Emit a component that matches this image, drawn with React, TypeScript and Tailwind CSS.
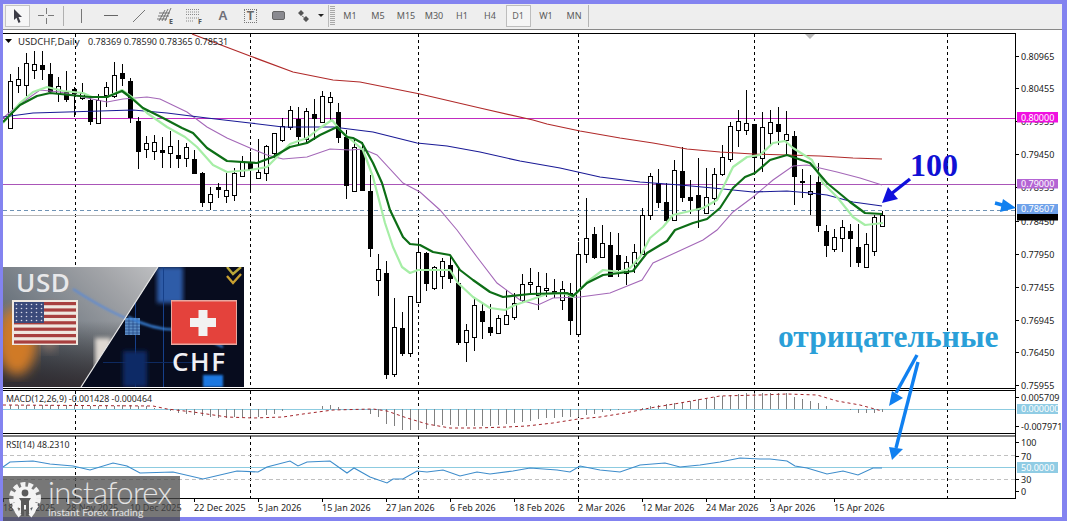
import React from "react";

const C: number[][] = [
[117,117,150,150,1],[74,81,128,128,0],[67,79,85,93,0],[53,63,85,96,0],[51,64,70,79,0],[51,65,69,80,1],[63,74,91,93,1],[77,86,93,102,0],[71,91,99,102,1],[87,89,93,117,1],
[83,93,98,100,0],[98,100,121,125,1],[94,100,123,124,0],[82,87,95,107,0],[62,75,96,98,0],[64,73,78,86,1],[78,81,117,123,1],[117,121,151,169,1],[136,143,149,158,0],[135,142,151,160,0],
[137,150,152,168,1],[131,146,153,168,0],[140,155,158,168,1],[143,147,158,167,0],[150,159,173,173,1],[172,173,202,207,1],[187,194,202,210,0],[183,187,189,198,1],[173,190,196,203,0],[168,173,195,201,0],
[156,161,176,176,0],[152,162,169,193,1],[139,172,178,178,0],[145,146,173,181,0],[133,133,153,158,0],[118,126,140,142,0],[106,110,127,130,0],[107,119,136,145,1],[108,111,139,143,0],[99,114,118,140,1],
[91,96,122,123,0],[92,97,102,122,0],[103,112,137,143,1],[130,137,185,199,1],[138,147,191,191,0],[142,150,190,190,1],[175,191,248,257,1],[254,269,280,296,0],[261,273,374,379,1],[298,327,374,377,0],
[312,328,353,356,1],[296,296,353,357,0],[238,252,302,303,0],[252,253,283,291,1],[266,267,288,290,0],[258,261,276,289,0],[255,265,278,283,1],[268,283,342,345,1],[324,330,342,362,0],[298,305,337,351,0],
[302,311,321,339,1],[304,327,332,336,1],[315,318,333,334,0],[290,315,324,324,0],[293,303,317,320,0],[274,284,300,302,0],[268,282,284,293,0],[272,286,295,310,0],[273,288,290,297,0],[279,291,293,298,1],
[281,289,300,310,0],[283,293,320,335,1],[242,254,334,334,0],[198,238,254,263,0],[227,234,257,259,1],[225,243,257,257,0],[232,245,276,277,1],[233,255,269,277,1],[256,262,273,285,0],[244,252,263,273,0],
[208,215,254,254,0],[173,176,215,220,0],[169,183,202,208,1],[183,202,220,223,1],[160,170,220,220,0],[147,171,197,202,1],[180,197,200,214,1],[158,195,209,228,1],[168,197,213,214,0],[168,174,198,205,0],
[145,157,174,176,0],[122,126,159,162,0],[110,121,130,147,0],[90,123,130,135,0],[124,124,157,175,1],[112,127,158,172,0],[110,122,133,145,0],[107,124,131,145,1],[111,134,140,155,0],[131,136,176,205,1],
[169,181,182,198,1],[175,191,194,215,0],[163,182,225,232,1],[225,231,245,257,1],[229,237,249,252,0],[220,227,238,252,0],[224,231,238,267,1],[224,247,262,267,1],[233,244,267,267,0],[215,217,251,256,0],[211,215,226,226,0],
];

const toPts = (a: number[][]) => a.map((p) => p.join(",")).join(" ");

const LIGHT = [[3,123],[20,103],[33,92],[47,87],[63,91],[83,93],[92,97],[107,97],[122,90],[133,98],[147,113],[167,127],[185,137],[197,147],[213,165],[227,172],[250,170],[267,167],[277,157],[290,144],[307,138],[320,128],[332,120],[340,130],[363,150],[373,177],[385,223],[393,247],[402,267],[410,273],[418,270],[450,270],[458,283],[473,297],[490,308],[505,310],[515,305],[530,300],[547,294],[563,293],[573,297],[587,282],[603,270],[620,272],[630,268],[640,257],[650,238],[663,227],[673,215],[703,208],[717,200],[733,167],[747,157],[760,155],[773,143],[785,141],[793,148],[812,160],[823,183],[837,197],[853,217],[865,225],[883,223]];
const DARK = [[3,122],[20,105],[37,96],[50,93],[70,95],[90,97],[107,97],[122,91],[130,97],[143,108],[163,118],[182,128],[193,133],[207,148],[227,161],[257,163],[273,157],[290,147],[307,143],[320,135],[337,127],[347,137],[353,138],[362,143],[373,163],[382,183],[390,210],[403,237],[410,244],[420,245],[433,252],[450,255],[460,270],[473,280],[490,292],[503,297],[530,294],[567,293],[573,296],[587,283],[603,275],[620,273],[633,271],[647,253],[667,241],[675,230],[693,223],[707,219],[720,208],[733,188],[745,177],[755,173],[770,160],[787,155],[810,163],[827,183],[850,202],[865,213],[882,214]];
const PURPLE = [[3,118],[20,104],[40,90],[60,92],[87,98],[107,102],[123,99],[147,97],[160,99],[187,112],[207,127],[227,138],[250,148],[267,155],[283,159],[307,157],[330,149],[350,150],[363,149],[377,155],[403,183],[420,192],[440,210],[457,230],[477,257],[497,283],[520,300],[538,305],[553,298],[580,297],[610,293],[642,280],[653,263],[677,252],[703,240],[717,230],[733,212],[753,197],[773,180],[793,166],[807,165],[837,172],[860,178],[882,185]];
const NAVY = [[3,117],[33,113],[67,112],[133,110],[167,113],[207,118],[250,123],[283,127],[333,127],[373,132],[417,143],[447,146],[480,152],[520,161],[560,168],[600,177],[640,182],[680,185],[713,188],[753,192],[787,191],[810,193],[827,195],[853,202],[882,206]];
const RED = [[192,34],[250,56],[293,72],[333,80],[360,82],[420,94],[480,108],[533,120],[547,124],[580,131],[620,138],[653,143],[687,149],[720,152],[753,154],[787,155],[820,156],[853,158],[882,159]];
const SIGNAL = [[3,405],[153,406],[167,409],[193,412],[227,417],[253,418],[283,417],[303,414],[333,410],[373,409],[387,411],[407,418],[427,424],[450,428],[477,428],[507,427],[527,426],[553,423],[578,419],[600,417],[625,413],[650,408],[680,403],[720,396],[760,395],[787,394],[817,395],[837,401],[860,405],[882,411]];
const RSI = [[3,467],[10,462],[33,461],[50,464],[73,466],[90,470],[113,463],[127,466],[140,473],[173,472],[203,479],[237,471],[258,472],[267,467],[290,461],[298,466],[307,462],[330,461],[347,473],[354,468],[370,477],[387,483],[393,479],[403,479],[417,471],[427,472],[443,470],[460,476],[477,472],[490,474],[513,471],[530,468],[557,470],[570,472],[580,466],[600,470],[620,472],[640,465],[665,463],[680,467],[700,465],[720,462],[740,458],[760,459],[770,459],[787,461],[795,466],[807,468],[827,474],[843,471],[858,475],[873,468],[882,468]];

const HIST = [4,4,4,4,4,4,4,4,4,4,3,3,3,3,3,4,4,3,3,1,0,-2,-4,-5,-6,-7,-8,-9,-9,-8,-8,-8,-8,-6,-5,-2,0,0,0,0,3,4,2,0,0,0,-5,-8,-15,-17,-21,-21,-21,-20,-17,-16,-16,-17,-17,-17,-17,-17,-16,-15,-14,-13,-12,-10,-9,-9,-8,-8,-8,-6,-5,-3,-2,-1,0,0,1,3,4,5,6,7,8,10,11,12,13,14,15,16,16,16,16,16,16,12,10,8,6,3,0,0,-1,-4,-4,-4,-3];

const VERT = [75, 250, 418, 578, 754, 947];
const FONT = "'Noto Sans', 'Liberation Sans', sans-serif";

function Verticals({ y1, y2 }: { y1: number; y2: number }) {
  return (
    <>
      {VERT.map((x) => (
        <line key={x} x1={x + 0.5} x2={x + 0.5} y1={y1} y2={y2} stroke="#000" strokeDasharray="3 3" shapeRendering="crispEdges" />
      ))}
    </>
  );
}

function Tick({ y, t, fill = "#222" }: { y: number; t: string; fill?: string }) {
  return (
    <>
      <line x1="1015" x2="1019" y1={y + 0.5} y2={y + 0.5} stroke="#000" shapeRendering="crispEdges" />
      <text x="1021" y={y + 3.5} fontSize="9" fill={fill} fontFamily={FONT}>{t}</text>
    </>
  );
}

function Tag({ y, h, fill, t, color = "#fff" }: { y: number; h: number; fill: string; t: string; color?: string }) {
  return (
    <>
      <rect x="1017" y={y} width="41" height={h} fill={fill} />
      <text x="1021" y={y + h / 2 + 3.3} fontSize="9" fill={color} fontFamily={FONT}>{t}</text>
    </>
  );
}

function MainPane() {
  return (
    <svg viewBox="3 33 1059 357" width="1059" height="357" className="block shrink-0 bg-white">
      <rect x="3" y="33" width="1012" height="1" fill="#000" />
      <Verticals y1={34} y2={388} />
      <path d="M805 34h10l-5 5z" fill="#b8b8b8" />
      <line x1="3" x2="1015" y1="118.5" y2="118.5" stroke="#c02cc0" shapeRendering="crispEdges" />
      <line x1="3" x2="1015" y1="184.5" y2="184.5" stroke="#aa55b8" shapeRendering="crispEdges" />
      <line x1="3" x2="1015" y1="210.5" y2="210.5" stroke="#6f93b5" strokeDasharray="4 3" shapeRendering="crispEdges" />
      <line x1="3" x2="1015" y1="215.5" y2="215.5" stroke="#b8b8b8" shapeRendering="crispEdges" />
      {C.map((c, i) => {
        const x = 2.5 + 8 * i;
        const [wt, bt, bb, wb, black] = c;
        return (
          <g key={i} shapeRendering="crispEdges">
            <line x1={x} x2={x} y1={wt} y2={wb} stroke="#000" />
            {i > 0 && (
              <rect x={x - 2} y={bt + 0.5} width={4} height={Math.max(bb - bt, 1)} fill={black ? "#000" : "#fff"} stroke="#000" />
            )}
          </g>
        );
      })}
      <polyline points={toPts(RED)} fill="none" stroke="#b02a2a" strokeWidth="1.2" />
      <polyline points={toPts(PURPLE)} fill="none" stroke="#a468b8" strokeWidth="1.1" />
      <polyline points={toPts(NAVY)} fill="none" stroke="#1a1a96" strokeWidth="1.2" />
      <polyline points={toPts(LIGHT)} fill="none" stroke="#a6eea6" strokeWidth="2.2" strokeLinejoin="round" />
      <polyline points={toPts(DARK)} fill="none" stroke="#0d6e16" strokeWidth="2.2" strokeLinejoin="round" />
      <path d="M5 39h7l-3.5 4z" fill="#000" />
      <text x="18" y="44.5" fontSize="9.6" fill="#2a2a2a" fontFamily={FONT}>USDCHF,Daily</text>
      <text x="88" y="44.5" fontSize="9" fill="#2a2a2a" fontFamily={FONT}>0.78369 0.78590 0.78365 0.78531</text>
      <rect x="3" y="388" width="1012" height="1" fill="#000" />
      <rect x="1015" y="33" width="1" height="357" fill="#000" />
      <Tick y={56} t="0.80965" />
      <Tick y={88} t="0.80455" />
      <Tick y={121} t="0.79955" />
      <Tick y={154} t="0.79450" />
      <Tick y={187} t="0.78955" />
      <Tick y={221} t="0.78450" />
      <Tick y={254} t="0.77950" />
      <Tick y={287} t="0.77455" />
      <Tick y={320} t="0.76945" />
      <Tick y={352} t="0.76450" />
      <Tick y={385} t="0.75955" />
      <Tag y={112} h={10.5} fill="#f010e0" t="0.80000" />
      <Tag y={179} h={9.5} fill="#b464d4" t="0.79000" />
      <rect x="1017" y="214" width="41" height="6.5" fill="#000" />
      <Tag y={204} h={10} fill="#6fa2ea" t="0.78607" />
    </svg>
  );
}

function MacdPane() {
  return (
    <svg viewBox="3 390 1059 44" width="1059" height="44" className="block shrink-0 bg-white">
      <rect x="3" y="390" width="1012" height="1" fill="#000" />
      <rect x="3" y="433" width="1012" height="1" fill="#000" />
      <Verticals y1={391} y2={433} />
      <line x1="3" x2="1015" y1="409.5" y2="409.5" stroke="#8ccbe0" shapeRendering="crispEdges" />
      {HIST.map((h, i) =>
        h === 0 ? null : (
          <line key={i} x1={2.5 + 8 * i} x2={2.5 + 8 * i} y1={409} y2={409 - h} stroke="#808080" shapeRendering="crispEdges" />
        )
      )}
      <polyline points={toPts(SIGNAL)} fill="none" stroke="#a4262c" strokeDasharray="3 3" />
      <text x="6" y="402" fontSize="8.8" fill="#2a2a2a" fontFamily={FONT}>MACD(12,26,9) -0.001428 -0.000464</text>
      <rect x="1015" y="390" width="1" height="44" fill="#000" />
      <Tick y={397} t="0.005709" />
      <Tick y={426} t="-0.007971" />
      <Tag y={404} h={10} fill="#90cce4" t="0.000000" />
    </svg>
  );
}

function RsiPane() {
  return (
    <svg viewBox="3 434 1059 65" width="1059" height="65" className="block shrink-0 bg-white">
      <rect x="3" y="435.5" width="1012" height="1" fill="#000" />
      <Verticals y1={436} y2={498} />
      <line x1="3" x2="1015" y1="455.5" y2="455.5" stroke="#c0c0c0" strokeDasharray="4 3" shapeRendering="crispEdges" />
      <line x1="3" x2="1015" y1="479.5" y2="479.5" stroke="#c0c0c0" strokeDasharray="4 3" shapeRendering="crispEdges" />
      <line x1="3" x2="1015" y1="467.5" y2="467.5" stroke="#8ccbe0" shapeRendering="crispEdges" />
      <polyline points={toPts(RSI)} fill="none" stroke="#3d8ccb" strokeWidth="1.1" />
      <text x="6" y="448" fontSize="8.8" fill="#2a2a2a" fontFamily={FONT}>RSI(14) 48.2310</text>
      <rect x="3" y="498" width="1013" height="1" fill="#000" />
      <rect x="1015" y="434" width="1" height="65" fill="#000" />
      <Tick y={442} t="100" />
      <Tick y={456} t="70" />
      <Tick y={479} t="30" />
      <Tick y={491} t="0" />
      <Tag y={462} h={11} fill="#90cce4" t="50.0000" />
    </svg>
  );
}

const DATES = ["18 Nov 2025", "28 Nov 2025", "10 Dec 2025", "22 Dec 2025", "5 Jan 2026", "15 Jan 2026", "27 Jan 2026", "6 Feb 2026", "18 Feb 2026", "2 Mar 2026", "12 Mar 2026", "24 Mar 2026", "3 Apr 2026", "15 Apr 2026"];

function TimeAxis() {
  return (
    <div className="flex h-[18px] bg-white font-['Noto_Sans'] text-[9px] leading-[12px] text-[#222]">
      {DATES.map((d, i) => (
        <div key={d} className={i === 0 ? "w-[63px] shrink-0" : "w-[64px] shrink-0"}>
          <div className="h-[3px] w-px bg-black" />
          <div className="whitespace-nowrap">{d}</div>
        </div>
      ))}
    </div>
  );
}

function Cell({ children, w = "w-[28px]" }: { children?: React.ReactNode; w?: string }) {
  return <div className={`${w} flex h-[22px] shrink-0 items-center justify-center`}>{children}</div>;
}

function Grip() {
  return (
    <div className="mx-[1px] flex h-[20px] w-[5px] shrink-0 flex-col justify-between">
      {Array.from({ length: 10 }).map((_, i) => (
        <div key={i} className="h-px w-full bg-[#a8a8a8]" />
      ))}
    </div>
  );
}

function Toolbar() {
  const tf = ["M1", "M5", "M15", "M30", "H1", "H4", "D1", "W1", "MN"];
  return (
    <div className="flex h-[26px] shrink-0 items-center border-b border-[#888] bg-[#eeeeee] pb-[3px] pl-[2px] pt-px">
      <div className="flex h-[22px] w-[25px] shrink-0 items-center justify-center border border-[#c4c4c4] bg-[#f6f6f6]">
        <svg width="12" height="16" viewBox="0 0 12 16"><path d="M2 1l8 8H6.5l2 5-2 1-2-5.2L2 12z" fill="#3c3c46" /></svg>
      </div>
      <Cell w="w-[30px] ml-[1px]">
        <svg width="16" height="16" viewBox="0 0 16 16" stroke="#7a7a7a" shapeRendering="crispEdges"><path d="M0 7.5h6M10 7.5h6M8 0v6M8 10v6" /></svg>
      </Cell>
      <div className="mx-[2px] h-[20px] w-px shrink-0 bg-[#b0b0b0]" />
      <Cell w="w-[31px]">
        <svg width="3" height="14" viewBox="0 0 3 14"><path d="M1.5 0v14" stroke="#777" /></svg>
      </Cell>
      <Cell>
        <svg width="14" height="3" viewBox="0 0 14 3"><path d="M0 1.5h14" stroke="#666" /></svg>
      </Cell>
      <Cell>
        <svg width="14" height="14" viewBox="0 0 14 14"><path d="M1 13L13 1" stroke="#777" /></svg>
      </Cell>
      <Cell>
        <svg width="22" height="18" viewBox="0 0 22 18" fill="none">
          <path d="M1 12h10M2 9h11M3 6h11M9 3l-6 11M12 2l-6 12M15 1l-6 13" stroke="#666" strokeWidth="0.9" />
          <text x="13" y="17" fontSize="7" fontWeight="700" fill="#555" fontFamily={FONT}>E</text>
        </svg>
      </Cell>
      <Cell>
        <svg width="22" height="18" viewBox="0 0 22 18" fill="none">
          <path d="M2 2.5h13M2 5h13M2 7.5h13M2 11h13M2 14h8" stroke="#888" strokeDasharray="1 1" />
          <text x="14" y="17" fontSize="7" fontWeight="700" fill="#555" fontFamily={FONT}>F</text>
        </svg>
      </Cell>
      <Cell>
        <span className="font-['Liberation_Sans'] text-[13px] font-bold leading-none text-[#707078]">A</span>
      </Cell>
      <Cell w="w-[27px]">
        <span className="flex h-[14px] w-[13px] items-center justify-center border border-dotted border-[#777] font-['Liberation_Sans'] text-[12px] font-bold leading-none text-[#666]">T</span>
      </Cell>
      <Cell>
        <div className="h-[9px] w-[13px] rounded-[2px] border border-[#666] bg-[#8a8a90]" />
      </Cell>
      <Cell w="w-[36px]">
        <svg width="28" height="14" viewBox="0 0 28 14">
          <path d="M5 1l3 3-3 3-3-3zM10 7l3 3-3 3-3-3z" fill="#555" />
          <path d="M6 7l3 2" stroke="#777" />
          <path d="M22 5h6l-3 3z" fill="#222" />
        </svg>
      </Cell>
      <div className="h-[22px] w-px shrink-0 bg-[#bbb]" />
      <Grip />
      {tf.map((t) => (
        <div
          key={t}
          className={
            t === "D1"
              ? "mx-[1.5px] flex h-[22px] w-[25px] shrink-0 items-center justify-center border border-[#bdbdbd] bg-[#f5f5f5] font-['Noto_Sans'] text-[9px] text-[#666]"
              : "flex h-[22px] w-[28px] shrink-0 items-center justify-center font-['Noto_Sans'] text-[9px] text-[#5a5a5a]"
          }
        >
          {t}
        </div>
      ))}
      <div className="h-[22px] w-px shrink-0 bg-[#b4b4b4]" />
    </div>
  );
}

function Banner() {
  const stripes = Array.from({ length: 13 });
  return (
    <svg viewBox="0 0 241 120" width="241" height="120" className="absolute left-[3px] top-[267px]">
      <defs>
        <linearGradient id="lg" x1="0" y1="0.6" x2="1" y2="0.1">
          <stop offset="0" stopColor="#5a6570" />
          <stop offset="0.55" stopColor="#a2a4a8" />
          <stop offset="1" stopColor="#e0e0e0" />
        </linearGradient>
        <linearGradient id="lb" x1="0" y1="0" x2="0" y2="1">
          <stop offset="0.45" stopColor="#000" stopOpacity="0" />
          <stop offset="1" stopColor="#2a2226" stopOpacity="0.85" />
        </linearGradient>
        <clipPath id="lc"><path d="M0 0H155L78 120H0z" /></clipPath>
        <clipPath id="rc"><path d="M155 0H241V120H78z" /></clipPath>
        <filter id="b6"><feGaussianBlur stdDeviation="6" /></filter>
        <filter id="b2"><feGaussianBlur stdDeviation="2" /></filter>
        <filter id="b1"><feGaussianBlur stdDeviation="0.8" /></filter>
      </defs>
      <g clipPath="url(#lc)">
        <rect width="241" height="120" fill="url(#lg)" />
        <rect width="241" height="120" fill="url(#lb)" />
        <ellipse cx="14" cy="74" rx="20" ry="34" fill="#d07a28" filter="url(#b6)" />
        <ellipse cx="46" cy="60" rx="8" ry="24" fill="#a08070" filter="url(#b6)" />
        <rect x="92" y="71" width="16" height="32" fill="#ded8d2" filter="url(#b2)" />
        <path d="M70 22C90 35 105 44 125 52" fill="none" stroke="#5a8ad8" strokeWidth="2" filter="url(#b1)" />
      </g>
      <g clipPath="url(#rc)">
        <rect width="241" height="120" fill="#070c1e" />
        <rect x="154" y="0" width="26" height="36" fill="#2f5ca8" filter="url(#b2)" />
        <rect x="132" y="0" width="1" height="120" fill="#16408a" />
        <rect x="160" y="0" width="1" height="120" fill="#16408a" />
        <rect x="100" y="95" width="100" height="1" fill="#0e2a60" />
        <rect x="120" y="84" width="24" height="36" fill="#0d2a66" filter="url(#b2)" />
        <rect x="200" y="108" width="20" height="12" fill="#1f78e0" filter="url(#b1)" />
        <rect x="122" y="51" width="15" height="17" fill="#5c8cc4" />
        <path d="M122 54h15M122 57h15M122 60h15M122 63h15M122 66h15M126 51v17M130 51v17M134 51v17" stroke="#1a3a78" strokeWidth="0.6" />
        <path d="M125 50C145 60 165 64 180 62S200 72 220 80" fill="none" stroke="#3a86e0" strokeWidth="2" filter="url(#b1)" />
        <path d="M224 0l6 7 8-7" fill="none" stroke="#b8a638" strokeWidth="2.4" />
        <path d="M224 9l6 7 8-9" fill="none" stroke="#c8a030" strokeWidth="2.4" />
      </g>
      <line x1="155" y1="0" x2="78" y2="120" stroke="#e8e8e8" strokeWidth="1.2" />
      <text x="13" y="25" fontSize="26" fontWeight="600" fill="#e8e8ea" letterSpacing="0.6" fontFamily="'Open Sans', sans-serif">USD</text>
      <text x="169" y="104" fontSize="26" fontWeight="600" fill="#f0f0f4" letterSpacing="1.6" fontFamily="'Open Sans', sans-serif">CHF</text>
      <g>
        <rect x="9" y="33" width="66" height="45" fill="#efe8e0" />
        {stripes.map((_, i) => (i % 2 === 0 ? <rect key={i} x="11" y={35 + i * 3.2} width="62" height="3.2" fill="#a8403f" /> : null))}
        <rect x="11" y="35" width="30" height="21" fill="#3b4a7a" />
        {Array.from({ length: 30 }).map((_, i) => (
          <circle key={i} cx={13.5 + (i % 6) * 5} cy={37.5 + Math.floor(i / 6) * 4} r="0.8" fill="#d8d8e8" />
        ))}
      </g>
      <g>
        <rect x="168" y="33" width="66" height="45" fill="#e8a8a0" />
        <rect x="169" y="34.5" width="64" height="42" fill="#e4423c" />
        <rect x="187" y="51" width="26" height="9" fill="#f2f2f2" />
        <rect x="195.5" y="43" width="9" height="26" fill="#f2f2f2" />
      </g>
    </svg>
  );
}

function Logo() {
  return (
    <div className="absolute left-[3px] top-[476px] flex h-[45px] w-[177px] items-start bg-[#4a4a4a]/75 pl-[4px] pt-[3px]">
      <svg width="36" height="38" viewBox="0 0 36 38" className="mt-[1px] shrink-0">
        <circle cx="18" cy="18" r="13" fill="none" stroke="#fff" strokeWidth="6" strokeDasharray="4.5 2.6" opacity="0.9" />
        <circle cx="18" cy="18" r="11.5" fill="#f4f4f4" />
        <circle cx="18" cy="13" r="3.4" fill="#5a5a5a" />
        <path d="M12 18h12l-2 3v15h-3V25h-2v11h-3V21z" fill="#5a5a5a" />
        <path d="M7 23c1 6 3 10 6 13M29 23c-1 6-3 10-6 13" stroke="#f4f4f4" strokeWidth="4" fill="none" />
      </svg>
      <div className="ml-[5px] flex flex-col font-['Lato'] text-white/80">
        <span className="text-[31px] font-light leading-[27px] tracking-[-0.7px]">instaforex</span>
        <span className="whitespace-nowrap text-[10.4px] leading-[12px]">Instant Forex Trading</span>
      </div>
    </div>
  );
}

function Annotations() {
  return (
    <>
      <svg viewBox="0 0 1067 521" width="1067" height="521" className="pointer-events-none absolute left-0 top-0">
        <path d="M910 179L891 194" stroke="#1010dc" strokeWidth="3.4" />
        <path d="M882 203L888 187L898 199z" fill="#1010dc" />
        <path d="M995 203L1006 206" stroke="#1080f0" strokeWidth="3.4" />
        <path d="M1016 208L1003 199L1000 212z" fill="#1080f0" />
        <path d="M917 355L896 393" stroke="#1080f0" strokeWidth="3.4" />
        <path d="M889 406L892 391L903 398z" fill="#1080f0" />
        <path d="M918 362L896 448" stroke="#1080f0" strokeWidth="3.4" />
        <path d="M892 460L889 447L903 449z" fill="#1080f0" />
      </svg>
      <div className="absolute left-[910px] top-[146px] font-['Liberation_Serif'] text-[32px] font-bold leading-[38px] text-[#1010d4]">100</div>
      <div className="absolute left-[778px] top-[320px] whitespace-nowrap font-['Liberation_Serif'] text-[31.5px] font-bold leading-[34px] text-[#2a9fd8]">отрицательные</div>
    </>
  );
}

export default function App() {
  return (
    <div className="relative h-[521px] w-[1067px] overflow-hidden bg-[#8383f0]">
      <div className="flex h-full flex-col pb-[4px] pl-[3px] pr-[5px] pt-[4px]">
        <Toolbar />
        <div className="h-[3px] shrink-0 bg-white" />
        <MainPane />
        <MacdPane />
        <RsiPane />
        <TimeAxis />
      </div>
      <Banner />
      <Annotations />
      <Logo />
    </div>
  );
}
